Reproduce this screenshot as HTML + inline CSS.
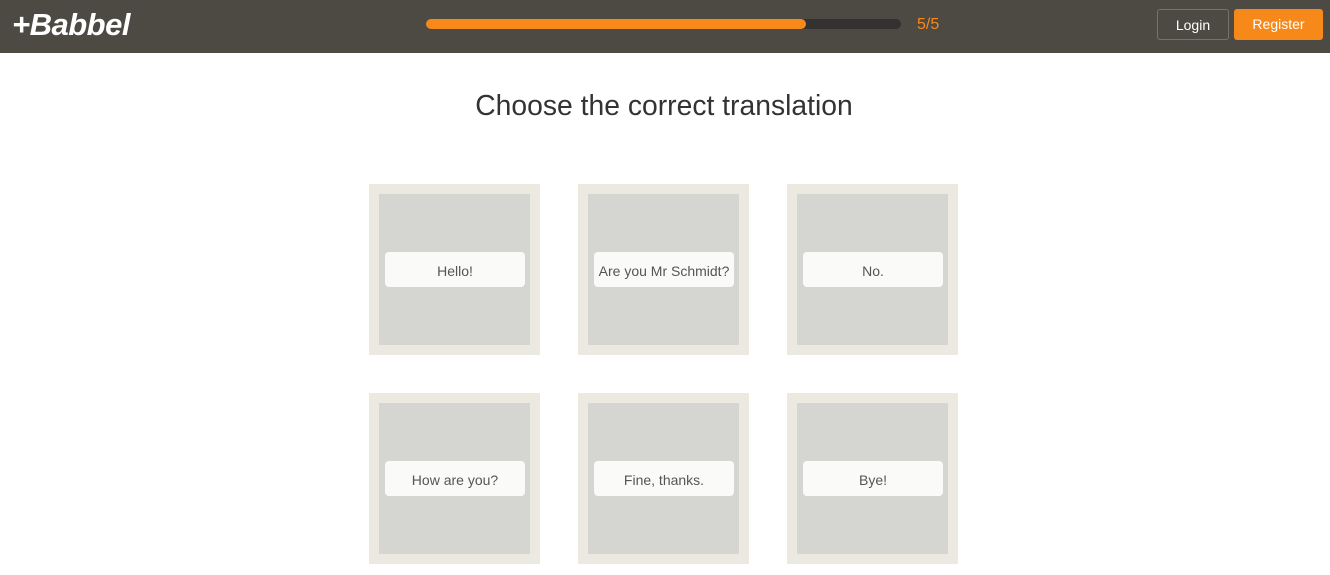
<!DOCTYPE html>
<html><head><style>
body{margin:0;width:1330px;height:575px;overflow:hidden;background:#fff;font-family:"Liberation Sans",sans-serif;position:relative}
.hdr{position:absolute;left:0;top:0;width:1330px;height:53px;background:#4c4a43}
.logo{position:absolute;left:12px;top:7px;color:#fff;font-size:31px;font-weight:bold;font-style:italic;letter-spacing:-0.5px}
.bar{position:absolute;left:426px;top:19px;width:475px;height:10px;background:#333230;border-radius:5px}
.fill{position:absolute;left:0;top:0;width:380px;height:10px;background:#f7891b;border-radius:5px}
.cnt{position:absolute;left:917px;top:16px;color:#f7891b;font-size:16px}
.btn{position:absolute;top:9px;height:31px;line-height:31px;color:#fff;font-size:14px;text-align:center;border-radius:3px;box-sizing:border-box}
h1{position:absolute;left:0;width:1328px;top:89px;margin:0;text-align:center;font-weight:normal;font-size:28.3px;color:#333}
.card{position:absolute;width:171px;height:171px;background:#ece9e1}
.in{position:absolute;left:10px;top:10px;width:151px;height:151px;background:#d5d6d1}
.lb{position:absolute;left:6px;top:58px;width:140px;height:35px;background:#fafaf8;border-radius:4px;text-align:center;line-height:38px;font-size:14px;color:#555}
</style></head><body>
<div class="hdr">
<div class="logo">+Babbel</div>
<div class="bar"><div class="fill"></div></div>
<div class="cnt">5/5</div>
<div class="btn" style="left:1157px;width:72px;border:1px solid #75736c">Login</div>
<div class="btn" style="left:1234px;width:89px;background:#f7891b">Register</div>
</div>
<h1>Choose the correct translation</h1>
<div class="card" style="left:369px;top:184px"><div class="in"><div class="lb">Hello!</div></div></div>
<div class="card" style="left:578px;top:184px"><div class="in"><div class="lb">Are you Mr Schmidt?</div></div></div>
<div class="card" style="left:787px;top:184px"><div class="in"><div class="lb">No.</div></div></div>
<div class="card" style="left:369px;top:393px"><div class="in"><div class="lb">How are you?</div></div></div>
<div class="card" style="left:578px;top:393px"><div class="in"><div class="lb">Fine, thanks.</div></div></div>
<div class="card" style="left:787px;top:393px"><div class="in"><div class="lb">Bye!</div></div></div>
</body></html>
